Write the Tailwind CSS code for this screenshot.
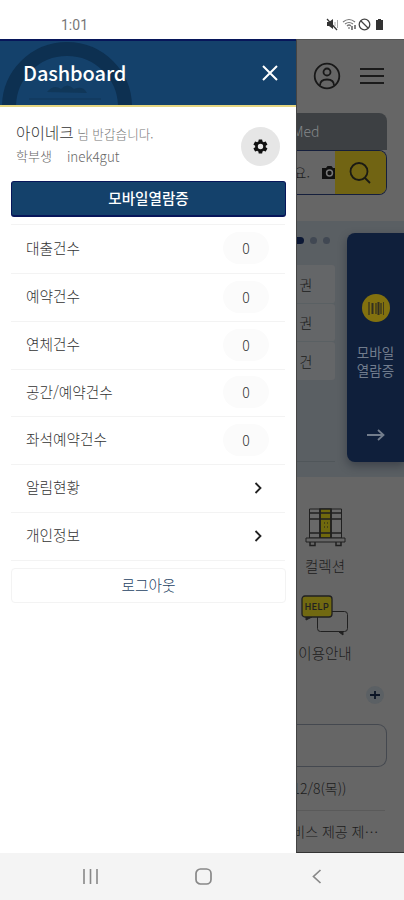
<!DOCTYPE html>
<html lang="ko">
<head>
<meta charset="utf-8">
<title>Dashboard</title>
<script src="https://cdn.jsdelivr.net/npm/@tailwindcss/browser@4"></script>
</head>
<body class="h-[900px] w-[404px] overflow-hidden bg-white font-['Noto_Sans_CJK_KR',sans-serif] flex flex-col whitespace-nowrap">
<header class="h-[39px] shrink-0 flex items-start justify-between pl-[61px] pr-[20px] pt-[15px]">
  <span class="text-[14px] leading-[20px] text-[#777] font-['Roboto',sans-serif]">1:01</span>
  <div class="flex items-center gap-[4px] pt-[3px]">
    <svg class="-mr-[1px]" width="13" height="13" viewBox="0 0 13 13"><path d="M1 4h2l4-3v10L3 8H1z" fill="#333"/><path d="M1 1l10 11" stroke="#333" stroke-width="1.2"/><path d="M9 4v4M11.5 2v8" stroke="#aaa" fill="none"/></svg>
    <svg width="15" height="13" viewBox="0 0 15 13" fill="none" stroke="#777" stroke-width="1.2"><path d="M1 4q6-5 12 0M3 6q4-3 8 0M5 8q2-2 4 0M7 9v2"/><path d="M10 8v4M13 7v4" stroke="#333"/></svg>
    <svg class="-ml-[3px]" width="13" height="13" viewBox="0 0 13 13" fill="none" stroke="#444" stroke-width="1.3"><circle cx="6.5" cy="6.5" r="5.3"/><path d="M3 3l7 7"/></svg>
    <svg width="9" height="13" viewBox="0 0 9 13"><path d="M3 1h3v1h2v10H1V2h2z" fill="#333"/></svg>
  </div>
</header>
<main class="h-[814px] shrink-0 flex overflow-hidden">
  <aside class="w-[295.5px] shrink-0 bg-white">
    <div class="relative h-[68px] overflow-hidden bg-[#14416b] border-t-2 border-t-[#07165a] border-b-2 border-b-[#e5d681] flex items-center justify-between pl-[23px] pr-[17px]">
      <svg class="absolute left-0 top-0" width="140" height="68" viewBox="0 0 140 68"><circle cx="67" cy="66" r="58" fill="none" stroke="#0d3051" stroke-width="14"/><path d="M47 51q7-8 14-3 6-7 13 0 9-4 13 4z" fill="#103759"/><path d="M29 58h72" stroke="#103759"/></svg>
      <h1 class="relative text-[20px] font-medium leading-[30px] text-white tracking-[-0.1px]">Dashboard</h1>
      <svg class="relative" width="18" height="18" viewBox="0 0 18 18" stroke="#fff" stroke-width="2" fill="none"><path d="M2 2l14 14M16 2L2 16"/></svg>
    </div>
    <div class="h-[74px] flex items-center justify-between pl-[16px] pr-[16px]">
      <div>
        <p class="h-[24px] leading-[24px] text-[12.600px] font-light text-[#777]"><span class="text-[15.700px] text-[#333]">아이네크</span> 님 반갑습니다.</p>
        <p class="flex gap-[15px] leading-[22px] font-light text-[#666]"><span class="text-[13px]">학부생</span><span class="text-[13.400px]">inek4gut</span></p>
      </div>
      <span class="mt-[4px] flex size-[39px] items-center justify-center rounded-full bg-[#e6e6e6]">
        <svg width="17" height="17" viewBox="0 0 24 24" fill="#111"><path fill-rule="evenodd" d="M19.4 13a7.800 7.800 0 0 0 0-2l2.100-1.600a.5.5 0 0 0 .1-.6l-2-3.500a.5.5 0 0 0-.6-.2l-2.500 1a7.300 7.300 0 0 0-1.700-1l-.4-2.600a.5.5 0 0 0-.5-.4h-4a.5.5 0 0 0-.5.4L9 5.100a7.300 7.300 0 0 0-1.700 1l-2.500-1a.5.5 0 0 0-.6.200l-2 3.500a.5.5 0 0 0 .1.600L4.500 11a7.800 7.800 0 0 0 0 2l-2.200 1.600a.5.5 0 0 0-.1.600l2 3.500c.1.200.4.300.6.200l2.500-1a7.300 7.300 0 0 0 1.700 1l.4 2.600c0 .2.200.4.500.4h4c.2 0 .5-.2.500-.4l.4-2.600a7.300 7.300 0 0 0 1.700-1l2.500 1c.2.100.5 0 .6-.2l2-3.500a.5.5 0 0 0-.1-.6zM12 15.800a3.800 3.800 0 1 1 0-7.600 3.800 3.800 0 0 1 0 7.600z"/></svg>
      </span>
    </div>
    <button class="mx-[11px] block h-[36px] w-[275px] rounded-[3px] border border-[#07165a] border-b-2 bg-[#14416b] text-[14.600px] font-medium text-white leading-[32px]"><span class="block -mt-[2px]">모바일열람증</span></button>
    <ul class="mx-[11px] mt-[7px] w-[274px] text-[14.700px] font-light text-[#333]">
      <li class="flex h-[49px] items-center justify-between border-t border-[#f3f3f3] pl-[15px] pr-[16px] pb-[2px]"><span>대출건수</span><span class="w-[46px] h-[32px] rounded-full bg-[#fbfbfb] text-center leading-[32px] text-[14px]">0</span></li>
      <li class="flex h-[48px] items-center justify-between border-t border-[#f3f3f3] pl-[15px] pr-[16px] pb-[2px]"><span>예약건수</span><span class="w-[46px] h-[32px] rounded-full bg-[#fbfbfb] text-center leading-[32px] text-[14px]">0</span></li>
      <li class="flex h-[48px] items-center justify-between border-t border-[#f3f3f3] pl-[15px] pr-[16px] pb-[2px]"><span>연체건수</span><span class="w-[46px] h-[32px] rounded-full bg-[#fbfbfb] text-center leading-[32px] text-[14px]">0</span></li>
      <li class="flex h-[47px] items-center justify-between border-t border-[#f3f3f3] pl-[15px] pr-[16px] pb-[2px]"><span>공간/예약건수</span><span class="w-[46px] h-[32px] rounded-full bg-[#fbfbfb] text-center leading-[32px] text-[14px]">0</span></li>
      <li class="flex h-[48px] items-center justify-between border-t border-[#f3f3f3] pl-[15px] pr-[16px] pb-[2px]"><span>좌석예약건수</span><span class="w-[46px] h-[32px] rounded-full bg-[#fbfbfb] text-center leading-[32px] text-[14px]">0</span></li>
      <li class="flex h-[48px] items-center justify-between border-t border-[#f3f3f3] pl-[15px] pr-[23px] pb-[2px]"><span>알림현황</span><svg width="8" height="12" viewBox="0 0 8 12" fill="none" stroke="#222" stroke-width="1.8"><path d="M1.500 1l5 5-5 5"/></svg></li>
      <li class="flex h-[49px] items-center justify-between border-y border-[#f3f3f3] pl-[15px] pr-[23px] pb-[2px]"><span>개인정보</span><svg width="8" height="12" viewBox="0 0 8 12" fill="none" stroke="#222" stroke-width="1.8"><path d="M1.500 1l5 5-5 5"/></svg></li>
    </ul>
    <button class="mx-[11px] mt-[7px] block h-[35px] w-[275px] rounded-[4px] border border-[#f3f3f3] text-[14.700px] font-light leading-[33px] text-[#1d4263]"><span class="block -mt-[2px]">로그아웃</span></button>
  </aside>
  <section class="w-[108.5px] shrink-0 overflow-hidden border-l border-t border-b border-l-[#444] border-t-[#555] border-b-[#333] bg-[#666] text-[#1c1c1c]">
    <div class="flex h-[73px] items-center gap-[18px] pl-[16px] pb-[1px]">
      <svg width="28" height="28" viewBox="0 0 28 28" fill="none" stroke="#181818" stroke-width="1.800"><circle cx="14" cy="14" r="12.300"/><circle cx="14" cy="10" r="3.500"/><path d="M7 23.500q0-6 7-6t7 6"/></svg>
      <svg width="26" height="18" viewBox="0 0 26 18" stroke="#1b1b1b" stroke-width="2"><path d="M1 2h24M1 9h24M1 16h24"/></svg>
    </div>
    <div class="w-[90px]">
      <div class="flex h-[37px] items-center rounded-tr-[8px] bg-[#3d4043] text-[14px] font-light text-[#85888a]"><span class="-ml-[4px]">Med</span></div>
      <div class="flex h-[45px] overflow-hidden rounded-r-[8px] border border-l-0 border-[#151f3c]">
        <div class="flex w-[38px] items-center justify-between overflow-hidden text-[14px] font-light"><span class="-ml-[3px]">요.</span>
          <svg class="-mr-[2px] shrink-0" width="15" height="15" viewBox="0 0 15 15"><path d="M0 3h4l1.500-2h4L11 3h4v11H0z" fill="#111"/><circle cx="7.500" cy="8" r="3.700" fill="#777"/><circle cx="7.500" cy="8" r="2.200" fill="#111"/></svg>
        </div>
        <div class="flex flex-1 items-center justify-center bg-[#716413]">
          <svg width="24" height="24" viewBox="0 0 24 24" fill="none" stroke="#1a1a14" stroke-width="1.800"><circle cx="11" cy="10.500" r="8.500"/><path d="M17 17l5 5"/></svg>
        </div>
      </div>
    </div>
    <div class="relative mt-[26px] h-[256px] bg-[#5a5f63]">
      <div class="flex h-[39px] items-center gap-[6px]"><i class="h-[7px] w-[7px] rounded-r-full bg-[#0c1835]"></i><i class="size-[7px] rounded-full bg-[#414853]"></i><i class="size-[7px] rounded-full bg-[#414853]"></i></div>
      <div class="mt-[5px] h-[197px] w-[38px] border-b border-[#50565a] text-[14px] font-light">
        <div class="flex h-[39px] items-center rounded-r-[3px] border-b border-[#5a6063] bg-[#646668] pl-[3px]">권</div>
        <div class="flex h-[38px] items-center rounded-r-[3px] border-b border-[#5a6063] bg-[#646668] pl-[3px]">권</div>
        <div class="flex h-[38px] items-center rounded-r-[3px] bg-[#646668] pl-[3px]">건</div>
      </div>
      <div class="absolute left-[50px] top-[12px] flex h-[229px] w-[58px] flex-col items-center rounded-l-[8px] bg-[#0f1f3b] pt-[61px] text-[#717c8d] shadow-[0_4px_10px_rgba(10,15,30,0.35)]">
        <span class="flex size-[28px] items-center justify-center rounded-full bg-[#82710f]"><svg width="16" height="13" viewBox="0 0 16 13" stroke="#322f20"><path d="M1 0v13M8 1v11M13 1v11" stroke-width="1.200"/><path d="M4.500 1v11M10.500 0v13" stroke-width="2"/><path d="M15.500 0v13" stroke-width=".8"/></svg></span>
        <p class="mt-[21px] text-center text-[13.500px] leading-[18px]"><span class="block">모바일</span><span class="block">열람증</span></p>
        <svg class="mt-[50px]" width="18" height="12" viewBox="0 0 18 12" fill="none" stroke="#737d8c" stroke-width="1.800"><path d="M0 6h16M11 1l5.500 5-5.500 5"/></svg>
      </div>
    </div>
    <div class="flex h-[198px] w-[57px] flex-col items-center pt-[30px] text-[14.500px] font-light leading-[20px]">
      <svg class="shrink-0" width="42" height="42" viewBox="0 0 42 42" fill="none" stroke="#202020"><path d="M5.500 2h32v29h-32z" fill="#696969"/><path d="M16 2h11v29H16z" fill="#70690d" stroke-width="1.500"/><path d="M5 6h33M5 12h33M5 26h33" stroke-width="1.700"/><path d="M16 2v29M27 2v29" stroke-width="1.500"/><path d="M20 16h1M23 16h1M20 20h1M23 20h1"/><path d="M2 31h39v4H2z" fill="#666"/><path d="M6 35v3.500h5V35M32 35v3.500h5V35" stroke-width="1.500"/></svg>
      <span class="mt-[7px]">컬렉션</span>
      <svg class="mt-[19px] shrink-0" width="48" height="42" viewBox="0 0 48 42" fill="none" stroke="#202020"><rect x="16.500" y="16.500" width="30" height="20" rx="3"/><path d="M38 37l4 3v-4" fill="#202020"/><path d="M5 22v3l6-3" fill="#202020"/><rect x="1" y="1" width="30" height="21" rx="3" fill="#716911" stroke-width="1.300"/><text x="16" y="15" text-anchor="middle" stroke="none" fill="#222" font-size="9" font-weight="500" font-family="Roboto, sans-serif" letter-spacing="0.600">HELP</text></svg>
      <span class="mt-[6px]">이용안내</span>
    </div>
    <div class="flex h-[40px] items-center justify-end pr-[20px]"><span class="flex size-[18px] items-center justify-center rounded-full bg-[#5b6064]"><svg width="10" height="10" viewBox="0 0 10 10" stroke="#0c1525" stroke-width="1.800"><path d="M0 5h10M5 1v8"/></svg></span></div>
    <div class="mt-[9px] h-[43px] w-[90px] rounded-r-[9px] border border-l-0 border-[#44484f]"></div>
    <div class="w-[88px] text-[14px] font-light">
      <div class="flex h-[44px] items-center justify-end overflow-hidden border-b border-[#5a5a5a] pr-[38px]">12/8(목))</div>
      <div class="flex h-[41px] items-center justify-end overflow-hidden pr-[6px]">비스 제공 제⋯</div>
    </div>
  </section>
</main>
<nav class="flex h-[47px] shrink-0 items-center bg-[#f4f4f4] pl-[83px] text-[#888]">
  <svg width="15" height="15" viewBox="0 0 15 15" stroke="#888" stroke-width="1.600"><path d="M1 0v15M7.500 0v15M14 0v15"/></svg>
  <svg class="ml-[97px]" width="17" height="17" viewBox="0 0 17 17" fill="none" stroke="#888" stroke-width="1.700"><rect x="1" y="1" width="15" height="15" rx="4.500"/></svg>
  <svg class="ml-[100px]" width="10" height="15" viewBox="0 0 10 15" fill="none" stroke="#888" stroke-width="1.700"><path d="M8.500 1L1.500 7.500l7 6.500"/></svg>
</nav>
</body>
</html>
